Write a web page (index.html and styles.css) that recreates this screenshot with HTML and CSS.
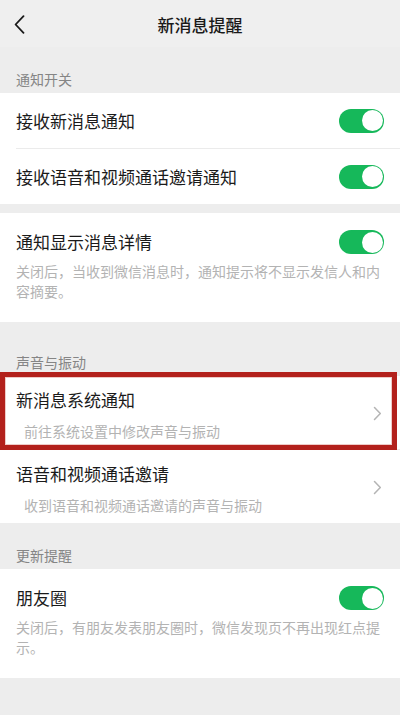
FILE: index.html
```html
<!DOCTYPE html>
<html lang="zh-CN">
<head>
<meta charset="utf-8">
<title>新消息提醒</title>
<link rel="stylesheet" href="styles.css">
</head>
<body>
<div class="page">
  <header class="nav">
    <div class="nav-back">
      <svg width="11" height="19" viewBox="0 0 11 19"><path d="M9.5 1.2 L1.6 9.5 L9.5 17.8" fill="none" stroke="#1a1a1a" stroke-width="1.8" stroke-linecap="round" stroke-linejoin="round"/></svg>
    </div>
    <div class="nav-title">新消息提醒</div>
    <div class="nav-side"></div>
  </header>

  <div class="label">通知开关</div>
  <section class="group">
    <div class="row">
      <span class="row-title">接收新消息通知</span>
      <span class="switch"><span class="knob"></span></span>
    </div>
    <div class="divider"></div>
    <div class="row">
      <span class="row-title">接收语音和视频通话邀请通知</span>
      <span class="switch"><span class="knob"></span></span>
    </div>
  </section>

  <section class="group group-gap">
    <div class="cell">
      <div class="cell-head">
        <span class="row-title">通知显示消息详情</span>
        <span class="switch"><span class="knob"></span></span>
      </div>
      <p class="desc">关闭后，当收到微信消息时，通知提示将不显示发信人和内容摘要。</p>
    </div>
  </section>

  <div class="label label-gap">声音与振动</div>
  <section class="group">
    <div class="link-row">
      <div class="link-text">
        <div class="row-title">新消息系统通知</div>
        <div class="desc">前往系统设置中修改声音与振动</div>
      </div>
      <svg class="chev" width="9" height="15" viewBox="0 0 9 15"><path d="M1.5 1.5 L7.3 7.5 L1.5 13.5" fill="none" stroke="#b4b4b4" stroke-width="1.5" stroke-linecap="round" stroke-linejoin="round"/></svg>
      <div class="highlight"></div>
    </div>
    <div class="divider"></div>
    <div class="link-row">
      <div class="link-text">
        <div class="row-title">语音和视频通话邀请</div>
        <div class="desc">收到语音和视频通话邀请的声音与振动</div>
      </div>
      <svg class="chev" width="9" height="15" viewBox="0 0 9 15"><path d="M1.5 1.5 L7.3 7.5 L1.5 13.5" fill="none" stroke="#b4b4b4" stroke-width="1.5" stroke-linecap="round" stroke-linejoin="round"/></svg>
    </div>
  </section>

  <div class="label">更新提醒</div>
  <section class="group">
    <div class="cell">
      <div class="cell-head">
        <span class="row-title">朋友圈</span>
        <span class="switch"><span class="knob"></span></span>
      </div>
      <p class="desc">关闭后，有朋友发表朋友圈时，微信发现页不再出现红点提示。</p>
    </div>
  </section>
</div>
</body>
</html>
```

FILE: styles.css
```css
html, body {
  margin: 0;
  padding: 0;
  background: #ededed;
}
body {
  font-family: "Noto Sans CJK SC", "Noto Sans", sans-serif;
  color: #1a1a1a;
}
.page {
  width: 400px;
  min-height: 715px;
  background: #ededed;
}
.nav {
  height: 47px;
  display: grid;
  grid-template-columns: 60px 1fr 60px;
  align-items: center;
  background: #efefef;
}
.nav-back {
  display: flex;
  align-items: center;
  padding-left: 14px;
  padding-top: 1px;
}
.nav-back svg { display: block; }
.nav-title {
  text-align: center;
  font-size: 17px;
  font-weight: 500;
  line-height: 24px;
  padding-top: 2px;
}
.label {
  font-size: 14px;
  line-height: 16px;
  color: #858585;
  padding: 24px 16px 6px;
}
.label-gap {
  margin-top: 8px;
}
.group {
  background: #fff;
}
.group-gap {
  margin-top: 9px;
}
.row {
  height: 55px;
  display: flex;
  align-items: center;
  justify-content: space-between;
  padding: 0 16px;
}
.row-title {
  font-size: 17px;
  line-height: 24px;
  color: #1a1a1a;
}
.divider {
  height: 1px;
  margin-left: 16px;
  background: #ebebeb;
}
.switch {
  width: 45px;
  height: 24px;
  box-sizing: border-box;
  border-radius: 12px;
  background: #16b85a;
  display: flex;
  justify-content: flex-end;
  align-items: center;
  padding: 0 1.5px;
  flex: none;
}
.knob {
  width: 21px;
  height: 21px;
  border-radius: 50%;
  background: #fff;
}
.cell {
  padding: 17px 16px 21px;
}
.cell-head {
  display: flex;
  align-items: center;
  justify-content: space-between;
  height: 24px;
}
.desc {
  margin: 8px 0 0;
  font-size: 14px;
  line-height: 19.5px;
  color: #b3b3b3;
}
.link-row {
  position: relative;
  display: flex;
  align-items: center;
  padding: 12px 18px 8px 16px;
}
.link-text {
  flex: 1;
}
.link-text .desc {
  margin-top: 9px;
  margin-left: 8px;
  line-height: 20px;
}
.chev {
  display: block;
  flex: none;
  margin-top: -2px;
}
.highlight {
  position: absolute;
  top: -4px;
  left: 0;
  right: 3px;
  bottom: -1px;
  border: 5px solid #b3211c;
  box-shadow: inset 0 0 0 1px rgba(225, 160, 155, 0.55);
  pointer-events: none;
}
```
